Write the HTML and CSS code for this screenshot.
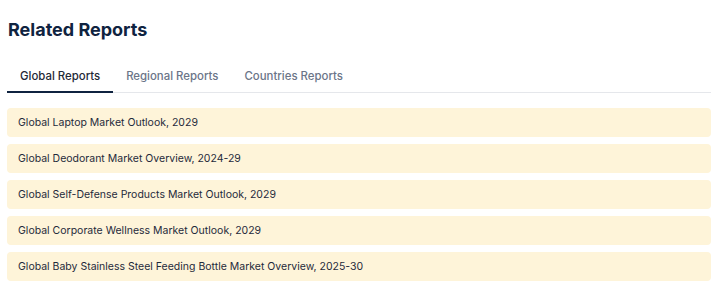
FILE: index.html
```html
<!DOCTYPE html>
<html>
<head>
<link rel="stylesheet" href="styles.css">
</head>
<body>

<div class="related">
  <h2 class="title">Related Reports</h2>

  <ul class="tabs">
    <li class="tab active">Global Reports</li>
    <li class="tab">Regional Reports</li>
    <li class="tab">Countries Reports</li>
  </ul>

  <div class="report-list">
    <a class="report" href="#">Global Laptop Market Outlook, 2029</a>
    <a class="report" href="#">Global Deodorant Market Overview, 2024-29</a>
    <a class="report" href="#">Global Self-Defense Products Market Outlook, 2029</a>
    <a class="report" href="#">Global Corporate Wellness Market Outlook, 2029</a>
    <a class="report" href="#">Global Baby Stainless Steel Feeding Bottle Market Overview, 2025-30</a>
  </div>
</div>

</body>
</html>
```

FILE: styles.css
```css
body {
  margin: 0;
  background: #fff;
  font-family: Inter, "Liberation Sans", sans-serif;
}

.related {
  padding: 18px 7px 0 7px;
}

.title {
  margin: 0 0 0 1px;
  font-size: 18px;
  font-weight: 700;
  line-height: 24px;
  color: #0f2340;
}

.tabs {
  list-style-type: none;
  margin: 17px 0 0 0;
  padding: 0;
  display: flex;
  border-bottom: 1px solid #e5e7eb;
}

.tab {
  padding: 9px 13px 7px 13px;
  font-size: 11.4px;
  font-weight: 500;
  line-height: 16px;
  color: #6b7588;
  margin-bottom: -1px;
  border-bottom: 2px solid transparent;
}

.tab.active {
  color: #1f2937;
  border-bottom-color: #0f2340;
}

.report-list {
  display: flex;
  flex-direction: column;
  gap: 7px;
  margin-top: 15px;
}

.report {
  display: block;
  background-color: #fef4d9;
  border-radius: 4px;
  padding: 7px 11px;
  font-size: 10.5px;
  line-height: 15px;
  color: #1e2a3b;
  text-decoration: none;
}
```
